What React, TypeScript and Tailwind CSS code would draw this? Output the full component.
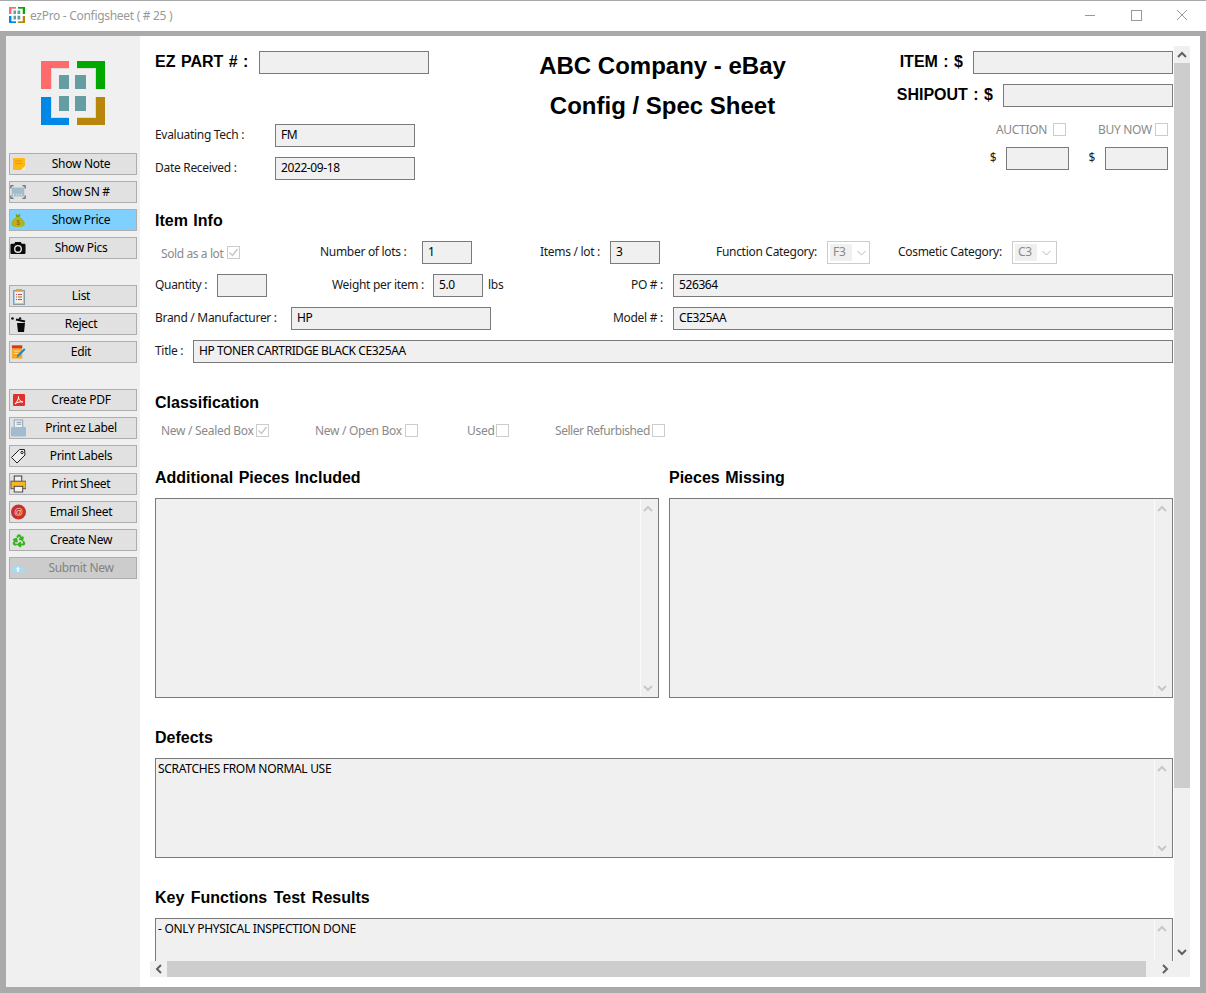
import type { ReactNode } from "react";
import { Recycle } from "lucide-react";

const ui = "font-['Noto_Sans','Open_Sans',sans-serif] text-[12px] tracking-[-0.3px]";
const bold = "text-[16px] font-bold tracking-normal [word-spacing:1px] text-black leading-none font-['Liberation_Sans',sans-serif]";
const row = "flex items-center whitespace-nowrap [&>span]:pb-[2px]";

function AppLogo({ size }: { size: number }) {
  return (
    <svg width={size} height={size} viewBox="0 0 64 64">
      <path d="M0 0H28V7H10V28H0Z" fill="#ff6a6a" />
      <path d="M36 0H64V28H55V7H36Z" fill="#00a800" />
      <path d="M0 36H10V57H28V64H0Z" fill="#0088e8" />
      <path d="M55 36H64V64H36V57H55Z" fill="#b8860b" />
      <path d="M10.500 28V7.500H28M36 7.500H54.500V28M54.500 36V56.500H36M28 56.500H10.500V36" fill="none" stroke="#dcdcdc" strokeWidth="1" />
      <rect x="18" y="14" width="10" height="14" fill="#669da3" />
      <rect x="34" y="14" width="11" height="14" fill="#669da3" />
      <rect x="18" y="35" width="10" height="15" fill="#669da3" />
      <rect x="34" y="35" width="11" height="15" fill="#669da3" />
    </svg>
  );
}

const icons: Record<string, ReactNode> = {
  note: (
    <svg width="16" height="16" viewBox="0 0 16 16">
      <rect x="3" y="2" width="12" height="12" rx="1" fill="#fdb813" />
      <path d="M5 5H12M5 7.500H12" stroke="#e59a00" />
      <path d="M11 14L15 10V14Z" fill="#fff4c8" />
    </svg>
  ),
  sn: (
    <svg width="18" height="16" viewBox="0 0 18 16">
      <rect x="2" y="3" width="14" height="10" fill="#a3bccb" />
      <path d="M1 4V1H4M14 1H17V4M17 12V15H14M4 15H1V12" fill="none" stroke="#4a5560" strokeWidth="1.200" />
      <path d="M4 12V10M7 12V10M10 12V10M13 12V10" stroke="#e8eef2" />
    </svg>
  ),
  price: (
    <svg width="17" height="17" viewBox="0 0 17 17">
      <path d="M6 1L8.500 3L11 1L10.500 5H6.500Z" fill="#7fa012" />
      <path d="M6.500 5H10.500C14 7 16.500 10 15.500 13.500C14.500 16 2.500 16 1.500 13.500C.5 10 3 7 6.500 5Z" fill="#9dbb1c" />
      <ellipse cx="8.500" cy="11" rx="4.500" ry="4" fill="#d9a520" />
      <text x="8.500" y="13.500" fontSize="7" textAnchor="middle" fill="#5d7a10" fontFamily="Liberation Sans">$</text>
    </svg>
  ),
  pics: (
    <svg width="17" height="16" viewBox="0 0 17 16">
      <path d="M2 3.500H4.500L5.500 1.500H11.500L12.500 3.500H15C16 3.500 16.500 4 16.500 5V13C16.500 14 16 14.500 15 14.500H2C1 14.500 .5 14 .5 13V5C.5 4 1 3.500 2 3.500Z" fill="#0a0a0a" />
      <circle cx="8.500" cy="9" r="4.200" fill="#f0f0f0" />
      <circle cx="8.500" cy="9" r="2.800" fill="#0a0a0a" />
    </svg>
  ),
  list: (
    <svg width="16" height="17" viewBox="0 0 16 17">
      <rect x="3.500" y="2.500" width="11" height="14" fill="#a9cbe8" stroke="#8c9aa5" />
      <rect x="5" y="4" width="8" height="11" fill="#f4f1e4" />
      <rect x="6" y="1" width="6" height="2.500" fill="#d8a840" />
      <path d="M6 6.500H7M8 6.500H12M6 9H7M8 9H12M6 11.500H7M8 11.500H12" stroke="#c0504d" />
    </svg>
  ),
  reject: (
    <svg width="16" height="16" viewBox="0 0 16 16">
      <path d="M7 7H15L14 16H8Z" fill="#0a0a0a" />
      <path d="M6 3.500L15 5.500" stroke="#0a0a0a" strokeWidth="2" />
      <path d="M9 3L11 2" stroke="#0a0a0a" strokeWidth="2" />
      <circle cx="2.500" cy="2.500" r="1.300" fill="#0a0a0a" />
    </svg>
  ),
  edit: (
    <svg width="17" height="16" viewBox="0 0 17 16">
      <rect x="2" y="1" width="11" height="14" fill="#f5a623" />
      <rect x="2" y="1" width="11" height="3" fill="#d9342b" />
      <path d="M4 7H11M4 9.500H9" stroke="#fde3ad" />
      <path d="M15 4L16.500 5.500L9 13L7 14L8 11Z" fill="#1f88c9" />
    </svg>
  ),
  pdf: (
    <svg width="16" height="16" viewBox="0 0 16 16">
      <rect x="3" y="2" width="12" height="12" rx="1" fill="#e2302c" />
      <path d="M5 12C7 10 9 6 8.500 4.500C8 6 10 10 13 10C11 9.500 7 10 5 12Z" fill="none" stroke="#fff" strokeWidth="1" />
    </svg>
  ),
  ezlabel: (
    <svg width="17" height="18" viewBox="0 0 17 18">
      <rect x="4.500" y="0.500" width="9" height="9" fill="#eef1f4" stroke="#8aa0b2" />
      <path d="M7 3H12M7 5H12" stroke="#7d93a5" />
      <rect x="1" y="8" width="16" height="10" rx="1" fill="#a3bbd0" />
    </svg>
  ),
  tag: (
    <svg width="16" height="16" viewBox="0 0 16 16">
      <path d="M1.500 9.500L9.500 1.500L14.500 1.500L15 7L7 15Z" fill="#f0f0f0" stroke="#202020" strokeWidth="1" />
      <circle cx="12" cy="4.500" r="1.200" fill="none" stroke="#202020" />
    </svg>
  ),
  print: (
    <svg width="17" height="18" viewBox="0 0 17 18">
      <rect x="4.500" y="0.500" width="8" height="6" fill="#f0f0f0" stroke="#333" />
      <rect x="1" y="6" width="16" height="8" fill="#f9b51f" stroke="#555" />
      <rect x="4.500" y="11.500" width="9" height="6" fill="#f4f4f4" stroke="#444" />
    </svg>
  ),
  email: (
    <svg width="16" height="16" viewBox="0 0 16 16">
      <circle cx="8.500" cy="8" r="7.500" fill="#c8322a" />
      <text x="8.500" y="11" fontSize="9" textAnchor="middle" fill="#f7d9d6" fontFamily="Liberation Sans">@</text>
    </svg>
  ),
  recycle: <Recycle size={15} strokeWidth={3.500} color="#36b41f" className="ml-[2px]" />,
  submit: (
    <svg width="18" height="16" viewBox="0 0 18 16">
      <path d="M4 13C1 13 0.500 9 3.500 8.500C4 5 9 3.500 11 6.500C14 5.500 15 8 14.500 8.500C17.500 9 17.500 13 14.500 13Z" fill="#a4dcf5" />
      <path d="M9 6.500L6.500 9.500H8V12.500H10V9.500H11.500Z" fill="#f2f8fb" />
    </svg>
  ),
};

function SideButton({ icon, label, active, disabled, className = "" }: { icon: string; label: string; active?: boolean; disabled?: boolean; className?: string }) {
  return (
    <button
      className={`flex items-center w-[128px] h-[22px] border border-[#adadad] ${
        active ? "bg-[#7fd0ff] text-black" : disabled ? "bg-[#cccccc] text-[#838383]" : "bg-[#e1e1e1] text-black"
      } ${className}`}
    >
      <span className="w-[16px] h-[16px] shrink-0 flex items-center">{icons[icon]}</span>
      <span className="flex-1 text-center">{label}</span>
    </button>
  );
}

function Sidebar() {
  return (
    <aside className="w-[134px] shrink-0 bg-[#f0f0f0] pl-[3px]">
      <div className="pl-[32px] pt-[25px] h-[117px]">
        <AppLogo size={64} />
      </div>
      <div className="flex flex-col gap-[6px]">
        <SideButton icon="note" label="Show Note" />
        <SideButton icon="sn" label="Show SN #" />
        <SideButton icon="price" label="Show Price" active />
        <SideButton icon="pics" label="Show Pics" />
        <SideButton icon="list" label="List" className="mt-[20px]" />
        <SideButton icon="reject" label="Reject" />
        <SideButton icon="edit" label="Edit" />
        <SideButton icon="pdf" label="Create PDF" className="mt-[20px]" />
        <SideButton icon="ezlabel" label="Print ez Label" />
        <SideButton icon="tag" label="Print Labels" />
        <SideButton icon="print" label="Print Sheet" />
        <SideButton icon="email" label="Email Sheet" />
        <SideButton icon="recycle" label="Create New" />
        <SideButton icon="submit" label="Submit New" disabled />
      </div>
    </aside>
  );
}

function Input({ value, className = "" }: { value?: string; className?: string }) {
  return (
    <div className={`h-[23px] shrink-0 border border-[#7a7a7a] bg-[#f0f0f0] pl-[5px] text-[12px] font-normal leading-[20px] tracking-[-0.4px] text-black whitespace-nowrap font-['Noto_Sans',sans-serif] ${className}`}>
      {value}
    </div>
  );
}

function Check({ checked }: { checked?: boolean }) {
  return (
    <div className="w-[13px] h-[13px] shrink-0 border border-[#cccccc] bg-white flex items-center justify-center">
      {checked && (
        <svg width="11" height="11" viewBox="0 0 11 11">
          <path d="M1.500 5.500L4.500 8.500L9.500 2" fill="none" stroke="#c4c4c4" strokeWidth="1.300" />
        </svg>
      )}
    </div>
  );
}

function Select({ value, className = "" }: { value: string; className?: string }) {
  return (
    <div className={`h-[23px] shrink-0 border border-[#cccccc] p-[2px] flex items-center ${className}`}>
      <div className="bg-[#f0f0f0] h-[17px] w-[22px] pl-[3px] leading-[16px] text-[#8a8a8a]">{value}</div>
      <svg className="ml-[5px]" width="9" height="6" viewBox="0 0 9 6">
        <path d="M.5 1L4.500 5L8.500 1" fill="none" stroke="#b8b8b8" />
      </svg>
    </div>
  );
}

function Heading({ children, className = "" }: { children: ReactNode; className?: string }) {
  return <h2 className={`h-[18px] pt-[2px] ${bold} ${className}`}>{children}</h2>;
}

function Chevron({ dir, color = "#606060" }: { dir: "up" | "down" | "left" | "right"; color?: string }) {
  const d = { up: "M1 7L5 3L9 7", down: "M1 3L5 7L9 3", left: "M7 1L3 5L7 9", right: "M3 1L7 5L3 9" }[dir];
  return (
    <svg width="10" height="10" viewBox="0 0 10 10">
      <path d={d} fill="none" stroke={color} strokeWidth="2" />
    </svg>
  );
}

function TextBox({ value, className = "" }: { value?: string; className?: string }) {
  return (
    <div className={`border border-[#7a7a7a] bg-[#f0f0f0] flex ${className}`}>
      <div className="flex-1 pl-[2px] pt-[1px] text-black whitespace-nowrap">{value}</div>
      <div className="w-[18px] shrink-0 border-l border-[#fafafa] flex flex-col items-center justify-between pt-[5px] pb-[4px] pr-[3px]">
        <Chevron dir="up" color="#c8c8c8" />
        <Chevron dir="down" color="#c8c8c8" />
      </div>
    </div>
  );
}

function Form() {
  return (
    <div className="w-[1024px] h-[915px] overflow-hidden pl-[5px] pr-[1px] text-[#1a1a1a]">
      {/* header */}
      <div className="flex h-[154px]">
        <div className="w-[274px] shrink-0 pt-[5px]">
          <div className="flex items-center">
            <span className={`w-[104px] pb-[2px] ${bold}`}>EZ PART # :</span>
            <Input className="w-[170px]" />
          </div>
          <div className={`${row} mt-[50px]`}>
            <span className="w-[120px]">Evaluating Tech :</span>
            <Input value="FM" className="w-[140px]" />
          </div>
          <div className={`${row} mt-[10px]`}>
            <span className="w-[120px]">Date Received :</span>
            <Input value="2022-09-18" className="w-[140px]" />
          </div>
        </div>
        <div className="flex-1 text-center text-[24px] leading-[40px] font-bold tracking-normal text-black font-['Liberation_Sans',sans-serif]">
          <div>ABC Company - eBay</div>
          <div>Config / Spec Sheet</div>
        </div>
        <div className="w-[277px] shrink-0 pt-[5px]">
          <div className={`flex items-center justify-end ${bold}`}>
            <span className="pb-[2px]">ITEM : $</span>
            <Input className="w-[200px] ml-[10px]" />
          </div>
          <div className={`flex items-center justify-end mt-[10px] ${bold}`}>
            <span className="pb-[2px]">SHIPOUT : $</span>
            <Input className="w-[170px] ml-[10px]" />
          </div>
          <div className="flex items-center justify-end h-[13px] mt-[16px] pr-[5px] text-[#8a8a8a]">
            <span className="w-[57px] whitespace-nowrap">AUCTION</span>
            <Check />
            <span className="w-[57px] ml-[32px] whitespace-nowrap">BUY NOW</span>
            <Check />
          </div>
          <div className={`${row} justify-end mt-[11px] pr-[5px]`}>
            <span className="text-[#222222]">$</span>
            <Input className="w-[63px] ml-[10px]" />
            <span className="ml-[19px] text-[#222222]">$</span>
            <Input className="w-[63px] ml-[10px]" />
          </div>
        </div>
      </div>

      <Heading className="mt-[11px]">Item Info</Heading>
      <div className={`${row} mt-[12px] h-[23px]`}>
        <span className="ml-[6px] w-[66px] text-[#8a8a8a] pt-[4px] tracking-[-0.4px]">Sold as a lot</span>
        <Check checked />
        <span className="ml-[80px] w-[102px]">Number of lots :</span>
        <Input value="1" className="w-[50px]" />
        <span className="ml-[68px] w-[70px]">Items / lot :</span>
        <Input value="3" className="w-[50px]" />
        <span className="ml-[56px] w-[111px]">Function Category:</span>
        <Select value="F3" className="w-[43px]" />
        <span className="ml-[28px] w-[114px]">Cosmetic Category:</span>
        <Select value="C3" className="w-[45px]" />
      </div>
      <div className={`${row} mt-[10px]`}>
        <span className="w-[62px]">Quantity :</span>
        <Input className="w-[50px]" />
        <span className="ml-[65px] w-[101px]">Weight per item :</span>
        <Input value="5.0" className="w-[50px]" />
        <span className="ml-[5px] w-[143px]">lbs</span>
        <span className="w-[42px]">PO # :</span>
        <Input value="526364" className="flex-1" />
      </div>
      <div className={`${row} mt-[10px]`}>
        <span className="w-[136px]">Brand / Manufacturer :</span>
        <Input value="HP" className="w-[200px]" />
        <span className="ml-[122px] w-[60px]">Model # :</span>
        <Input value="CE325AA" className="flex-1" />
      </div>
      <div className={`${row} mt-[10px]`}>
        <span className="w-[38px]">Title :</span>
        <Input value="HP TONER CARTRIDGE BLACK CE325AA" className="flex-1" />
      </div>

      <Heading className="mt-[30px]">Classification</Heading>
      <div className="flex items-center mt-[13px] h-[13px] whitespace-nowrap text-[#8a8a8a]">
        <span className="ml-[6px] w-[95px]">New / Sealed Box</span>
        <Check checked />
        <span className="ml-[46px] w-[90px]">New / Open Box</span>
        <Check />
        <span className="ml-[49px] w-[29px]">Used</span>
        <Check />
        <span className="ml-[46px] w-[97px] tracking-[-0.45px]">Seller Refurbished</span>
        <Check />
      </div>

      <div className="grid grid-cols-2 gap-x-[10px] mt-[31px]">
        <div>
          <Heading>Additional Pieces Included</Heading>
          <TextBox className="mt-[12px] h-[200px]" />
        </div>
        <div>
          <Heading>Pieces Missing</Heading>
          <TextBox className="mt-[12px] h-[200px]" />
        </div>
      </div>

      <Heading className="mt-[30px]">Defects</Heading>
      <TextBox value="SCRATCHES FROM NORMAL USE" className="mt-[12px] h-[100px]" />

      <Heading className="mt-[30px]">
        <span className="[word-spacing:2px]">Key Functions Test Results</span>
      </Heading>
      <TextBox value="- ONLY PHYSICAL INSPECTION DONE" className="mt-[12px] h-[100px]" />
    </div>
  );
}

export default function App() {
  return (
    <div className={`w-[1206px] h-[993px] bg-[#aaaaaa] overflow-hidden flex flex-col ${ui}`}>
      <header className="h-[31px] shrink-0 bg-white border-t border-[#aaaaaa] flex items-center pl-[9px] text-[#999999]">
        <div className="-mt-[2px]"><AppLogo size={16} /></div>
        <span className="ml-[5px]">ezPro - Configsheet ( # 25 )</span>
        <div className="ml-auto flex items-center -mt-[2px]">
          <svg width="46" height="12" viewBox="0 0 46 12">
            <path d="M18 6.500H28" stroke="#999" />
          </svg>
          <svg width="46" height="12" viewBox="0 0 46 12">
            <rect x="18.500" y="1.500" width="10" height="10" fill="none" stroke="#999" />
          </svg>
          <svg width="46" height="12" viewBox="0 0 46 12" className="mr-[1px]">
            <path d="M18 1L28 11M28 1L18 11" stroke="#999" />
          </svg>
        </div>
      </header>
      <main className="mx-[6px] mt-[5px] h-[951px] flex">
        <Sidebar />
        <div className="flex-1 bg-white pl-[10px] pt-[10px]">
          <div className="flex">
            <Form />
            <div className="w-[16px] h-[931px] bg-[#f0f0f0] flex flex-col items-center">
              <div className="h-[17px] flex items-center"><Chevron dir="up" /></div>
              <div className="w-full h-[725px] bg-[#cdcdcd]" />
              <div className="mt-auto h-[34px] pt-[4px] flex justify-center"><Chevron dir="down" /></div>
            </div>
          </div>
          <div className="flex w-[1024px] h-[16px] bg-[#f0f0f0] -mt-[16px] items-center">
            <div className="w-[17px] flex justify-center"><Chevron dir="left" /></div>
            <div className="w-[979px] h-full bg-[#cdcdcd]" />
            <div className="flex-1 flex justify-center pl-[10px]"><Chevron dir="right" /></div>
          </div>
        </div>
      </main>
    </div>
  );
}
